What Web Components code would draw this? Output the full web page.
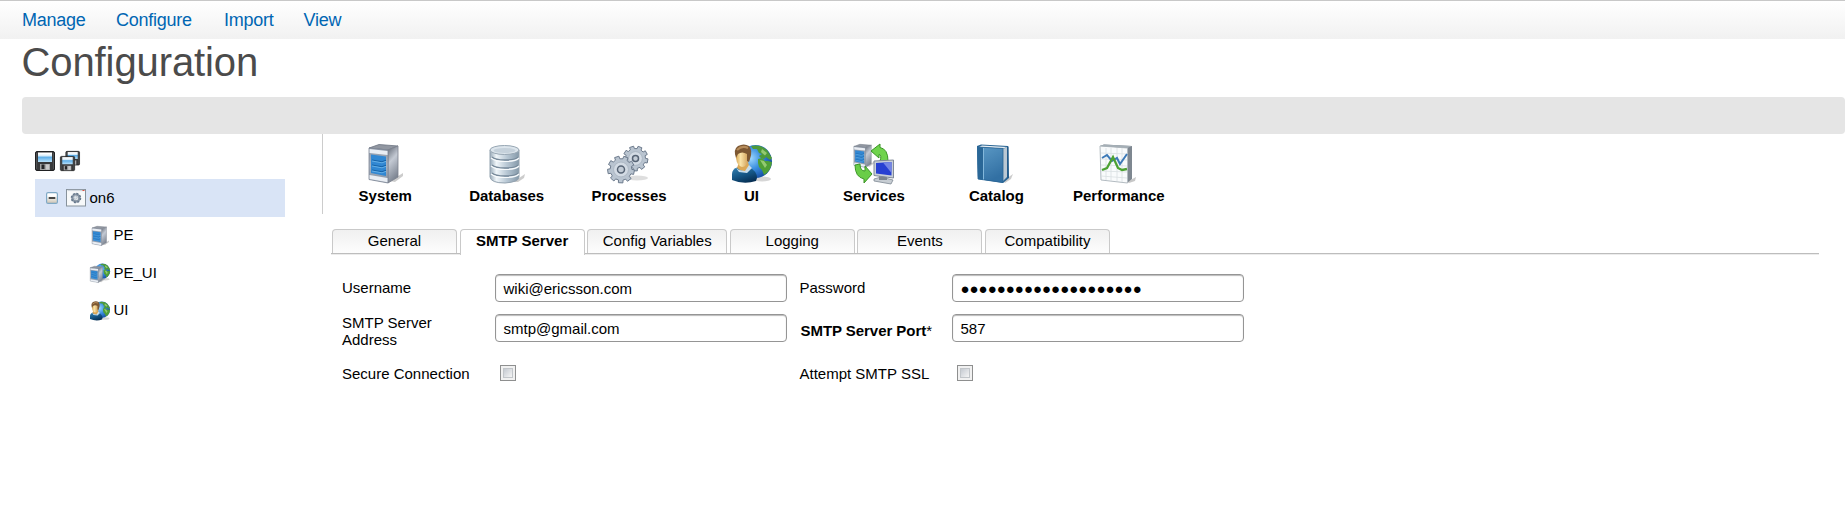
<!DOCTYPE html>
<html lang="en">
<head>
<meta charset="utf-8">
<title>Configuration</title>
<style>
body { margin: 0; background: #fff; color: #000; font: 15px/17px "Liberation Sans", Arial, sans-serif; }
</style>
</head>
<body>
<config-app></config-app>
<script>
const server = (id) => `
  <defs>
    <linearGradient id="${id}f" x1="0" y1="0" x2="0" y2="1"><stop offset="0" stop-color="#8d97a6"/><stop offset=".5" stop-color="#aab4c2"/><stop offset="1" stop-color="#8490a0"/></linearGradient>
    <linearGradient id="${id}s" x1="0" y1="0" x2=".3" y2="1"><stop offset="0" stop-color="#5f6672"/><stop offset=".45" stop-color="#c4cad4"/><stop offset="1" stop-color="#7d8592"/></linearGradient>
  </defs>
  <path d="M25 37L38 29L38 32L30 38Z" fill="#000" opacity=".2"/>
  <path d="M4 4L14 .5L33 2L23 6Z" fill="#9197a1" stroke="#6c7481" stroke-width=".8"/>
  <path d="M23 6L33 2V33L23 39Z" fill="url(#${id}s)" stroke="#7b828e" stroke-width=".8"/>
  <path d="M4 4L23 6V39L4 35.5Z" fill="url(#${id}f)" stroke="#7d8795" stroke-width=".8"/>
  <path d="M4.500 5L22.500 7V11L4.500 9ZM4.500 31L22.500 34V38.300L4.500 35Z" fill="#e9edf3"/>
  <path d="M6 10.500L21 12.500V32L6 29Z" fill="#3187d2"/>
  <path d="M7 16l10 1.800 4-1.500M7 21l10 1.800 4-1.500M7 26l10 1.800 4-1.500" fill="none" stroke="#1763a8" stroke-width="1.200"/>
  <path d="M7 17l10 1.800 4-1.500M7 22l10 1.800 4-1.500M7 27l10 1.800 4-1.500" fill="none" stroke="#6bb4ea" stroke-width=".9"/>`;

const globe = (id) => `
  <defs><radialGradient id="${id}g" cx=".35" cy=".4" r=".65"><stop offset="0" stop-color="#9ed8ff"/><stop offset=".5" stop-color="#3c90e0"/><stop offset="1" stop-color="#1550a4"/></radialGradient></defs>
  <ellipse cx="30" cy="35" rx="9" ry="2.500" fill="#000" opacity=".16"/>
  <circle cx="23.500" cy="17.500" r="16.500" fill="url(#${id}g)"/>
  <path d="M19 2Q29 0 35 6L40 14L38 16L34 13L32 15L29 14L27 12L30 10L27 9L25 5L21 5Z" fill="#4d9a3a"/>
  <path d="M26 15L30 14L33 17L36 17L40 18Q39 27 32 31L30 26L27 23L26 19Z" fill="#4f9f36"/>
  <path d="M30 5l5 4-2 2.500-4-3.500ZM28 16l4 1 3 4-2 3Z" fill="#93c971"/>`;

const user = (id) => `
  <defs>
    <linearGradient id="${id}b" x1=".2" y1="0" x2=".7" y2="1"><stop offset="0" stop-color="#2f7cae"/><stop offset=".5" stop-color="#155685"/><stop offset="1" stop-color="#052c50"/></linearGradient>
    <linearGradient id="${id}h"><stop offset="0" stop-color="#d9a755"/><stop offset=".35" stop-color="#fae4a8"/><stop offset="1" stop-color="#cc9850"/></linearGradient>
  </defs>
  <path d="M0 36V30Q0 25 6 23L17 23Q25 27 25 34L24 37Q12 41 0 36Z" fill="url(#${id}b)"/>
  <path d="M5 24L7 18H16L18 25Q11 30 5 24Z" fill="#dba857"/>
  <path d="M4 24L7 26L13 27L17 21L20 24L15 29L7 28Z" fill="#c7ddeb"/>
  <path d="M4 9Q10 5 17 9L17 14Q15 23 10 23Q5 22 4 14Z" fill="url(#${id}h)"/>
  <path d="M4 14Q1 5 6 2Q12-1 17 2Q21 6 18 15L17 18L15 17V10Q10 7 6 10Z" fill="#7c5732"/>
  <path d="M5 6Q10 1 16 4" fill="none" stroke="#b68c5b" stroke-width="2"/>`;

const gear = (cx, cy, r, hole, light = "#b9c4d0", edge = "#6d7b8d") => {
  let d = "";
  for (let i = 0; i < 9; i++) {
    for (const [off, rad] of [[-.3, .8], [-.24, 1], [.24, 1], [.3, .8]]) {
      const a = (i + off) * Math.PI * 2 / 9 + .2;
      d += (d ? "L" : "M") + (cx + Math.cos(a) * r * rad).toFixed(1) + " " + (cy + Math.sin(a) * r * rad).toFixed(1);
    }
  }
  return `<path d="${d}Z" fill="${light}" stroke="${edge}" stroke-width="1" stroke-linejoin="round"/>
  <circle cx="${cx}" cy="${cy}" r="${r * .55}" fill="#d3dbe4" stroke="#a7b2bf" stroke-width=".8"/>
  <circle cx="${cx}" cy="${cy}" r="${hole}" fill="#c3ccd6" stroke="#566374" stroke-width="1.500"/>`;
};

const disk = (id) => `
  <defs><linearGradient id="${id}" x1="0" y1="0" x2="0" y2="1"><stop offset=".1" stop-color="#fff"/><stop offset=".35" stop-color="#d5ebf9"/><stop offset=".5" stop-color="#5eaee8"/><stop offset="1" stop-color="#b9e2fb"/></linearGradient></defs>
  <rect x="1" y="1" width="38" height="38" rx="3" fill="#38393b" stroke="#1f2022" stroke-width="2"/>
  <path d="M3 36V4M37 36V4" stroke="#57595b" stroke-width="1.500"/>
  <rect x="6" y="3" width="28" height="19" fill="url(#${id})"/>
  <rect x="10" y="26" width="20" height="12" fill="#a3a4a5"/>
  <rect x="13" y="27" width="6" height="9" fill="#252628"/>
  <path d="M22 27h6v10h-6Z" fill="#c9cacb"/>`;

const icons = {
  server: server("a"),
  database: `
    <defs><linearGradient id="c"><stop offset="0" stop-color="#9aabb9"/><stop offset=".22" stop-color="#eff5f9"/><stop offset=".6" stop-color="#b5c5d2"/><stop offset="1" stop-color="#8599a9"/></linearGradient></defs>
    <path d="M26 38L38 30L37 34L31 38Z" fill="#000" opacity=".2"/>
    <path d="M3 6V33Q4 39 18 39Q32 38 32 33V6Z" fill="url(#c)" stroke="#93a2af"/>
    <path d="M5 13Q8 16 18 16Q29 16 31 13M5 21Q8 24 18 24Q29 24 31 21M5 29Q8 32 18 32Q29 32 31 29" fill="none" stroke="#77899a" stroke-width="1.300"/>
    <path d="M4 14Q8 17.500 18 17.500Q29 17.500 32 14M4 22Q8 25.500 18 25.500Q29 25.500 32 22M4 30Q8 33.500 18 33.500Q29 33.500 32 30" fill="none" stroke="#f7fafc" stroke-width="1.200"/>
    <ellipse cx="17.500" cy="6" rx="14.500" ry="4.500" fill="#dce5ec" stroke="#97a6b3"/>
    <ellipse cx="17.500" cy="6.500" rx="11" ry="2.500" fill="#c5d1db"/>`,
  gears: `<ellipse cx="28" cy="34" rx="11" ry="2.500" fill="#000" opacity=".13"/>` + gear(26.5, 14.5, 12.5, 3) + gear(12, 25.5, 13.5, 3.5),
  webuser: globe("d") + user("e"),
  webserver: `<g transform="translate(3 0) scale(.93)">${globe("f")}</g><g transform="translate(-3 6) scale(.85)">${server("g")}</g>`,
  services: `
    <g transform="translate(-2.500 0) scale(.6)">${server("h")}</g>
    <path d="M17 7L26 0V3.500Q34 5 34 17H26Q28 11 25 10.500V14Z" fill="#6fd34c" stroke="#3b9526"/>
    <path d="M1 21L6 20Q6 27 11 27V22L18 30L10 39V35Q1 33 1 21Z" fill="#69cd47" stroke="#3b9526"/>
    <path d="M20 35L27 33L39 36L37 40L20 37Z" fill="#c7cdd3" stroke="#7e8893" stroke-width=".8"/>
    <path d="M25 32H33V36H25Z" fill="#7b848e"/>
    <path d="M20 17L39.500 16V34L20 31.500Z" fill="#c8cfd7" stroke="#808a98"/>
    <path d="M22 19L37.500 18V31.500L22 29.500Z" fill="#2740d2"/><path d="M29 18.500L37.500 18V29Z" fill="#7485e3"/>`,
  book: `
    <defs><linearGradient id="k" x1="0" y1="0" x2=".4" y2="1"><stop offset="0" stop-color="#5c9ac6"/><stop offset="1" stop-color="#3270a3"/></linearGradient></defs>
    <path d="M27 37L37 30L35 35L29 39Z" fill="#000" opacity=".2"/>
    <path d="M1 2L5 .500L32 2L33 34L27 39L2 35Z" fill="#2a6594"/>
    <path d="M27 5L31 3V33L27 37Z" fill="#bac8d3"/>
    <path d="M3 3L6 1.500L31 3L27 4.500Z" fill="#e6edf2"/>
    <path d="M1.500 3L27 4.500V38.500L2 35Z" fill="url(#k)" stroke="#2a6594" stroke-width=".8"/>
    <path d="M1.500 3L7 3.500V35.500L2 35Z" fill="#2a6797"/><path d="M7.500 4V35.500" stroke="#83b7da"/>
    <path d="M32 2.500V34" stroke="#1e5686" stroke-width="1.200"/>`,
  chart: `
    <path d="M28 38L37 33L36 37L30 39Z" fill="#000" opacity=".22"/>
    <path d="M1 2L5 .500L33 2V35L28 39Z" fill="#7e8790"/>
    <path d="M1 2L28.500 4V39L2 36Z" fill="#f9fbfc" stroke="#b3bbc1"/>
    <path d="M1 2L5 .500L33 2L28.500 4Z" fill="#a5afb6"/>
    <path d="M7 4V36M12 4V37M18 4V37M23 4V38M2 9L28 10M2 15L28 16M2 21L28 22M2 27L28 28M2 32L28 34" stroke="#d9dfe2" stroke-width=".8"/>
    <path d="M3 14L8 11L13 17L18 14L21 20L28 10" fill="none" stroke="#3d7ab8" stroke-width="2"/>
    <path d="M3 26L8 24L14 13L19 24L23 26L28 25" fill="none" stroke="#4da233" stroke-width="2.300"/>`,
  save: disk("p"),
  saveall: `<g transform="translate(11 0) scale(.72)">${disk("q")}</g><g transform="translate(0 10) scale(.75)">${disk("r")}</g>`,
  appwin: `
    <rect x="1" y="3" width="38" height="33" fill="#f7f9fa" stroke="#87929c" stroke-width="2"/>
    <path d="M3 5H37" stroke="#d0d7dd" stroke-width="2.500"/><path d="M33 5H37" stroke="#dc5142" stroke-width="2"/>
    <circle cx="20" cy="20" r="7" fill="none" stroke="#8794a3" stroke-width="5"/>
    <circle cx="20" cy="20" r="9" fill="none" stroke="#66788c" stroke-width="3" stroke-dasharray="4 3"/>
    <circle cx="19" cy="19" r="3.500" fill="#dfe5ea" stroke="#b1bcc7" stroke-width="2"/>`,
  minus: `
    <defs><linearGradient id="m" x1="0" y1="0" x2="0" y2="1"><stop offset=".3" stop-color="#fff"/><stop offset="1" stop-color="#cbc2b1"/></linearGradient></defs>
    <rect x="2" y="2" width="36" height="36" rx="5" fill="url(#m)" stroke="#7fa9c6" stroke-width="4"/>
    <path d="M9 20H31" stroke="#111" stroke-width="5"/>`
};

const define = (name, css, html) => customElements.define(name, class extends HTMLElement {
  connectedCallback() {
    if (this.shadowRoot) return;
    const t = document.createElement("template");
    t.innerHTML = `<style>${css}</style>` + (typeof html === "function" ? html(this) : html);
    this.attachShadow({ mode: "open" }).append(t.content.cloneNode(true));
  }
});

define("ui-icon",
  `:host{display:block;flex:none;width:var(--size,40px);height:var(--size,40px)} svg{display:block;width:100%;height:100%;overflow:visible}`,
  el => `<svg viewBox="0 0 40 40" aria-hidden="true">${icons[el.getAttribute("name")]}</svg>`);

define("menu-bar",
  `:host{display:flex;box-sizing:border-box;height:39px;padding:8px 0 0 22px;border-top:1px solid #c8c8c8;background:linear-gradient(#fff,#f1f1f1);color:#0066b3}`,
  `<slot></slot>`);
define("menu-item",
  `:host{display:block;font-size:18px;line-height:22px;width:var(--w);letter-spacing:-.25px;white-space:nowrap}`,
  `<slot></slot>`);

define("page-title",
  `:host{display:block;height:58px} h1{margin:0;padding:0 0 0 21.5px;font-weight:400;font-size:40px;line-height:46px;letter-spacing:-.1px;color:#4b4b4b}`,
  `<h1><slot></slot></h1>`);

define("tool-strip", `:host{display:block;height:37px;margin-left:22px;border-radius:4px;background:#e5e5e5}`, ``);

define("tree-panel",
  `:host{display:block;width:250px;margin-left:35px;padding-top:17px;flex:none} .actions{display:flex;gap:5px;height:28px;--size:20px}`,
  `<div class="actions"><ui-icon name="save"></ui-icon><ui-icon name="saveall"></ui-icon></div><slot></slot>`);
define("tree-node",
  `:host{display:flex;align-items:center;height:37.5px;padding-left:55px;gap:3.5px;--size:20px}
   :host([selected]){padding-left:11px;background:#d9e4f6;height:38px}
   .toggle{--size:12px;margin-right:4.5px} span{line-height:17px;padding-bottom:2px}`,
  el => (el.hasAttribute("selected") ? `<ui-icon class="toggle" name="minus"></ui-icon>` : ``) +
    `<ui-icon name="${el.getAttribute("icon")}"></ui-icon><span><slot></slot></span>`);

define("category-bar",
  `:host{display:flex;box-sizing:border-box;height:80px;border-left:1px solid #ccc;margin-left:37px;padding:10px 0 0 1px}`,
  `<slot></slot>`);
define("category-item",
  `:host{display:flex;flex-direction:column;align-items:center;width:122.45px;font-weight:700} :host(:first-child){margin-right:-1px} span{margin-top:3px}`,
  el => `<ui-icon name="${el.getAttribute("icon")}"></ui-icon><span><slot></slot></span>`);

define("tab-list",
  `:host{display:flex;gap:2.6px;margin:15px 26px 0 46px;height:24px;padding-left:1px;border-bottom:1px solid #bdbdbd;box-shadow:0 1px #ececec}`,
  `<slot></slot>`);
define("tab-item",
  `:host{display:block;box-sizing:border-box;width:125px;height:24px;border:1px solid #c9c9c9;border-bottom:0;border-radius:4px 4px 0 0;background:linear-gradient(#f0f0f0,#fdfdfd);text-align:center;line-height:22px;white-space:nowrap}
   :host([wide]){width:140px}
   :host([active]){height:26px;background:#fff;font-weight:700}`,
  `<slot></slot>`);

define("form-grid",
  `:host{display:grid;grid-template-columns:153px 304.5px 152.5px 293px;grid-template-rows:40px 40px 54px;margin:20px 0 0 57px}`,
  `<slot></slot>`);
define("form-label",
  `:host{display:block;padding-top:var(--top,5px);white-space:pre-line} :host([required]){font-weight:700;padding-left:1px;letter-spacing:-.05px} i{font-style:normal;font-weight:400}`,
  el => `<slot></slot>` + (el.hasAttribute("required") ? `<i>*</i>` : ``));
define("text-field",
  `:host{display:block;box-sizing:border-box;width:292px;height:28px;border:1px solid #959595;border-radius:4px;box-shadow:inset 0 1px 1px #bbb;padding-left:7.5px;line-height:28px;white-space:nowrap}`,
  `<slot></slot>`);
define("check-box",
  `:host{display:block;box-sizing:border-box;width:16px;height:16px;margin:11px 0 0 5px;border:1px solid #8e8f8f;padding:2px;background:#f1f1f1}
   div{box-sizing:border-box;height:100%;border:1px solid #c2c6ca;background:linear-gradient(135deg,#c5cad1,#f5f5f5)}`,
  `<div></div>`);

define("config-app",
  `:host{display:block} main{display:flex} section{flex:1;min-width:0}`,
  `<menu-bar><menu-item style="--w:94px">Manage</menu-item><menu-item style="--w:108px">Configure</menu-item><menu-item style="--w:79.5px">Import</menu-item><menu-item>View</menu-item></menu-bar>
  <page-title>Configuration</page-title>
  <tool-strip></tool-strip>
  <main>
    <tree-panel>
      <tree-node selected icon="appwin">on6</tree-node>
      <tree-node icon="server">PE</tree-node>
      <tree-node icon="webserver">PE_UI</tree-node>
      <tree-node icon="webuser">UI</tree-node>
    </tree-panel>
    <section>
      <category-bar>
        <category-item icon="server">System</category-item>
        <category-item icon="database">Databases</category-item>
        <category-item icon="gears">Processes</category-item>
        <category-item icon="webuser">UI</category-item>
        <category-item icon="services">Services</category-item>
        <category-item icon="book">Catalog</category-item>
        <category-item icon="chart">Performance</category-item>
      </category-bar>
      <tab-list>
        <tab-item>General</tab-item><tab-item active>SMTP Server</tab-item><tab-item wide>Config Variables</tab-item><tab-item>Logging</tab-item><tab-item>Events</tab-item><tab-item>Compatibility</tab-item>
      </tab-list>
      <form-grid>
        <form-label>Username</form-label><text-field>wiki@ericsson.com</text-field>
        <form-label>Password</form-label><text-field>●●●●●●●●●●●●●●●●●●●●</text-field>
        <form-label style="--top:0px">SMTP Server
Address</form-label><text-field>smtp@gmail.com</text-field>
        <form-label required style="--top:8px">SMTP Server Port</form-label><text-field>587</text-field>
        <form-label style="--top:11px">Secure Connection</form-label><check-box></check-box>
        <form-label style="--top:11px">Attempt SMTP SSL</form-label><check-box></check-box>
      </form-grid>
    </section>
  </main>`);
</script>
</body>
</html>
